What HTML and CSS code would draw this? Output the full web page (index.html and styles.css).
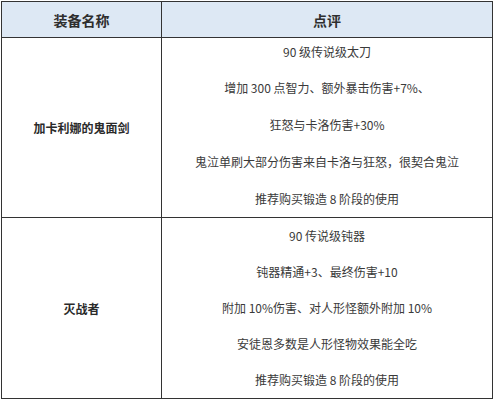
FILE: index.html
```html
<!DOCTYPE html>
<html lang="zh-CN">
<head>
<meta charset="utf-8">
<title>装备点评</title>
<link rel="stylesheet" href="styles.css">
</head>
<body>
<table class="gear">
  <colgroup>
    <col class="col-name">
    <col class="col-review">
  </colgroup>
  <thead>
    <tr class="head-row">
      <th>装备名称</th>
      <th>点评</th>
    </tr>
  </thead>
  <tbody>
    <tr class="item-row first-item">
      <td class="name">加卡利娜的鬼面剑</td>
      <td class="review">
        <p>90 级传说级太刀</p>
        <p>增加 300 点智力、额外暴击伤害+7%、</p>
        <p>狂怒与卡洛伤害+30%</p>
        <p>鬼泣单刷大部分伤害来自卡洛与狂怒，很契合鬼泣</p>
        <p>推荐购买锻造 8 阶段的使用</p>
      </td>
    </tr>
    <tr class="item-row">
      <td class="name">灭战者</td>
      <td class="review">
        <p>90 传说级钝器</p>
        <p>钝器精通+3、最终伤害+10</p>
        <p>附加 10%伤害、对人形怪额外附加 10%</p>
        <p>安徒恩多数是人形怪物效果能全吃</p>
        <p>推荐购买锻造 8 阶段的使用</p>
      </td>
    </tr>
  </tbody>
</table>
</body>
</html>
```

FILE: styles.css
```css
html, body {
  margin: 0;
  padding: 0;
  background: #ffffff;
}

body {
  padding: 1px 0 0 1px;
  font-family: "Noto Sans CJK SC", "Noto Sans", sans-serif;
  color: #333333;
}

.gear {
  border-collapse: collapse;
  width: 491px;
  table-layout: fixed;
}

.col-name {
  width: 160px;
}

.col-review {
  width: 331px;
}

.gear th,
.gear td {
  border: 1px solid #333333;
  padding: 0;
  text-align: center;
  vertical-align: middle;
}

.head-row th {
  height: 35px;
  background: #dde8f4;
  font-size: 14px;
  font-weight: bold;
  color: #2e2e2e;
}

.name {
  font-size: 12px;
  font-weight: bold;
  color: #2a2a2a;
}

.review p {
  margin: 0;
  height: 36px;
  line-height: 36px;
  font-size: 12px;
  color: #3a3a3a;
}

.first-item .review p {
  height: 37px;
  line-height: 37px;
}

.first-item .review p:first-child {
  height: 31px;
  line-height: 28px;
}
```
